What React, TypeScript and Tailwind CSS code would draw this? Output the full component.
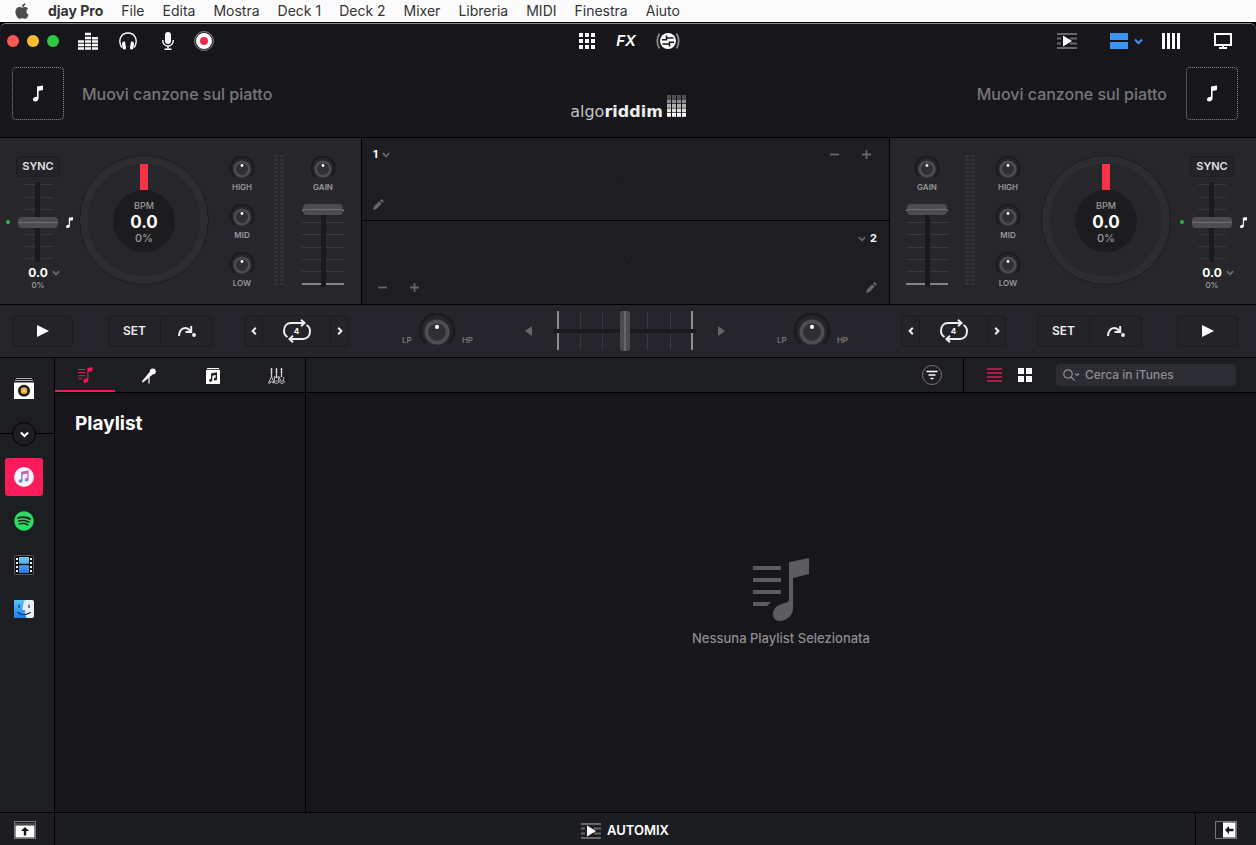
import React, { useState } from 'react'
import { FaApple, FaSpotify } from 'react-icons/fa'

const menuItems = ['File', 'Edita', 'Mostra', 'Deck 1', 'Deck 2', 'Mixer', 'Libreria', 'MIDI', 'Finestra', 'Aiuto']

const NoteIcon: React.FC<any> = ({ className }) => (
    <svg viewBox="0 0 10 16" className={className} fill="currentColor">
        <path d="M4 1 L10 0 V4.6 L5.6 5.4 V12.6 C5.6 14.8 4 16 2.2 16 C0.8 16 0 15.2 0 14 C0 12.4 1.4 11.3 4 11.2 Z" />
    </svg>
)

const ChevronIcon: React.FC<any> = ({ className }) => (
    <svg viewBox="0 0 8 6" className={className} fill="none" stroke="currentColor" strokeWidth="1.8">
        <path d="M0.8 1.2 L4 4.4 L7.2 1.2" />
    </svg>
)

const AutomixIcon: React.FC<any> = () => (
    <svg viewBox="0 0 20 16" className="w-5 h-4">
        <path d="M0 1h20M0 5.5h4M0 10.5h4M0 15h20M13 5.5h7M13 10.5h7" stroke="#68676c" strokeWidth="2" />
        <path d="M6 2.5 L15 8 L6 13.5 Z" fill="#fff" />
    </svg>
)

const PlaylistIcon: React.FC<any> = ({ className }) => (
    <svg viewBox="0 0 57 63" className={className} fill="currentColor">
        <path d="M0 8h28v4h-28zM0 20h28v4h-28zM0 32h28v4h-28zM0 44h18l-4 4h-14z" />
        <path d="M36 4.5 Q36 4 37 4 L56 0 V16 L40 20 V50 C40 58 34 62 27 63 C22 63 20 60 20 56 C20 50 25 47 30 45.5 C34 44.5 36 44 36 41 Z" />
    </svg>
)

const EqualizerIcon: React.FC<any> = () => (
    <svg viewBox="0 0 20 18" className="w-5 h-[18px]" fill="none" stroke="#fff" strokeWidth="2.4">
        <path d="M0 16.5h6M0 13h6M0 9.5h6" />
        <path d="M7 16.5h6M7 13h6M7 9.5h6M7 6h6M7 2h6" />
        <path d="M14 16.5h6M14 13h6M14 9.5h6M14 6.3h6" />
    </svg>
)

const HeadphonesIcon: React.FC<any> = () => (
    <svg viewBox="0 0 18 18" className="w-[18px] h-[18px]">
        <path d="M2.6 15.5 C-1.5 8 2 1 9 1 C16 1 19.5 8 15.4 15.5" fill="none" stroke="#fff" strokeWidth="1.4" />
        <path d="M3 11.5 Q3 10 4.5 9.6 Q6 9 6.2 10.5 L7 16 Q7 17.6 5.5 17.6 Q4 17.6 3.5 16 Z" fill="#fff" />
        <path d="M15 11.5 Q15 10 13.5 9.6 Q12 9 11.8 10.5 L11 16 Q11 17.6 12.5 17.6 Q14 17.6 14.5 16 Z" fill="#fff" />
    </svg>
)

const MicIcon: React.FC<any> = () => (
    <svg viewBox="0 0 12 18" className="w-3 h-[18px]">
        <rect x="3" y="0" width="6" height="12" rx="3" fill="#fff" />
        <path d="M0.7 8 C0.7 16 11.3 16 11.3 8 M6 14v3M2.5 17.2h7" fill="none" stroke="#fff" strokeWidth="1.4" />
    </svg>
)

const RecordIcon: React.FC<any> = () => (
    <svg viewBox="0 0 20 20" className="w-5 h-5">
        <circle cx="10" cy="10" r="9.4" fill="none" stroke="#8b8b8e" />
        <circle cx="10" cy="10" r="8" fill="#fff" />
        <circle cx="10" cy="10" r="4" fill="#f3254a" />
    </svg>
)

const CrossfadeIcon: React.FC<any> = () => (
    <svg viewBox="0 0 24 18" className="w-6 h-[18px]" fill="none">
        <circle cx="12" cy="9" r="8" fill="#fff" />
        <path d="M3.5 1.5 Q-1 9 3.5 16.5 M20.5 1.5 Q25 9 20.5 16.5" stroke="#8b8b8e" strokeWidth="1.8" />
        <path d="M17.5 6H10.5M10.5 3.5V8.5M10.5 7.7H6M6.5 12H13.5M13.5 14.5V9.5M13.5 10.3H18" stroke="#17161a" strokeWidth="1.5" />
    </svg>
)

const LoopIcon: React.FC<any> = () => (
    <svg viewBox="0 0 28 24" className="w-7 h-6" fill="none" stroke="#eeeef0" strokeWidth="2">
        <path d="M4.5 18 C2 16.5 1 14 1 12 C1 7 4 4 8 4 H20" />
        <path d="M18 0.8 L21.5 4 L18 7.2" />
        <path d="M23.5 6 C26 7.5 27 10 27 12 C27 17 24 20 20 20 H8" />
        <path d="M10 16.8 L6.5 20 L10 23.2" />
    </svg>
)

const SkipIcon: React.FC<any> = () => (
    <svg viewBox="0 0 18 12" className="w-[18px] h-3" fill="none" stroke="#eeeef0" strokeWidth="2">
        <path d="M1 11 C1.5 3 8 0.5 12.5 6" />
        <path d="M13.2 1 V7 H7.5" />
        <circle cx="16" cy="10" r="1.9" fill="#eeeef0" stroke="none" />
    </svg>
)

const PencilIcon: React.FC<any> = () => (
    <svg viewBox="0 0 11 11" className="w-[11px] h-[11px]" fill="currentColor">
        <path d="M0 11 L1 7.5 L6.2 2.3 L8.7 4.8 L3.5 10 Z M7 1.5 L8 0.5 Q8.8 0 9.6 0.8 L10.3 1.5 Q11 2.2 10.4 3 L9.5 4 Z" />
    </svg>
)

const Knob: React.FC<any> = ({ label, large }) => (
    <label className={large ? 'relative block w-[38px] h-[38px]' : 'relative block w-[26px] h-[26px]'}>
        <svg viewBox="0 0 26 26" className="w-full h-full">
            <path d="M5.2 20.8 A11.6 11.6 0 1 1 20.8 20.8" fill="none" stroke="#1b1a1e" strokeWidth="2" />
            <circle cx="13" cy="13" r="7.3" fill="#303034" stroke="#4d4d52" strokeWidth="2.6" />
            <circle cx="13" cy="9.5" r="1.4" fill="#fff" />
        </svg>
        <input type="range" aria-label={label} className="absolute inset-0 w-full h-full opacity-0" />
    </label>
)

const LabeledKnob: React.FC<any> = ({ label }) => (
    <div className="flex flex-col items-center h-12">
        <Knob label={label} />
        <span className="text-[8px] leading-[10px] font-semibold text-[#98979c]">{label}</span>
    </div>
)

const Meter: React.FC<any> = ({ color }) => (
    <svg viewBox="0 0 10 130" className="w-[10px] h-[130px]">
        {Array.from({ length: 33 }).map((_, i) => (
            <path key={i} d={`M0 ${i * 4 + 1}h4M6 ${i * 4 + 1}h4`} stroke={color} strokeWidth="2" />
        ))}
    </svg>
)

const verticalRange =
    'absolute inset-0 w-full h-full appearance-none bg-transparent [writing-mode:vertical-lr] [direction:rtl] [&::-webkit-slider-thumb]:appearance-none [&::-webkit-slider-thumb]:w-10 [&::-webkit-slider-thumb]:h-[11px] [&::-webkit-slider-thumb]:rounded [&::-webkit-slider-thumb]:bg-[linear-gradient(#4d4c51_45%,#6f6e73_45%,#6f6e73_55%,#4d4c51_55%)]'

const PitchControl: React.FC<any> = ({ deck }) => {
    const [pitch, setPitch] = useState(50)

    return (
        <div className="flex flex-col items-center w-[76px] pt-[18px] shrink-0">
            <button className="w-11 h-[21px] rounded border border-[#1c1b1f] bg-[#242328] text-[11px] font-semibold text-[#e2e2e4]">
                SYNC
            </button>
            <div className="mt-[5px] w-full grid grid-cols-[1fr_40px_1fr] items-center">
                <span className="w-1 h-1 rounded-full bg-[#28b446] ml-1.5" />
                <div className="relative w-10 h-20">
                    <svg viewBox="0 0 40 80" className="w-10 h-20">
                        <path d="M6 2.5h28M6 15.5h28M6 27.5h28M6 52.5h28M6 64.5h28M6 76.5h28" stroke="#38373c" />
                        <rect x="17" y="0" width="5" height="80" rx="1" fill="#1a191d" />
                    </svg>
                    <input
                        type="range"
                        aria-label={`Pitch deck ${deck}`}
                        value={pitch}
                        onChange={(e) => setPitch(Number(e.target.value))}
                        className={verticalRange}
                    />
                </div>
                <NoteIcon className="w-[7px] h-[11px] ml-2 text-white" />
            </div>
            <div className="mt-1 w-full grid grid-cols-[1fr_auto_1fr] items-center">
                <span />
                <span className="text-[12px] leading-[14px] font-bold text-white">0.0</span>
                <ChevronIcon className="w-2 h-1.5 ml-1 text-[#6c6b70]" />
            </div>
            <span className="text-[8px] leading-[10px] font-medium text-[#a3a2a7]">0%</span>
        </div>
    )
}

const Platter: React.FC<any> = () => (
    <div className="mt-[17px] w-[130px] h-[130px] shrink-0 rounded-full border border-[#1d1c20] bg-[#2d2c31] p-2">
        <div className="w-full h-full rounded-full bg-[#27262a] flex flex-col items-center">
            <div className="w-2 h-[26px] bg-[#fa3246]" />
            <div className="w-[62px] h-[62px] rounded-full bg-[#1c1b1e] flex flex-col items-center pt-2.5">
                <span className="text-[9px] leading-3 font-medium text-[#9b9a9f]">BPM</span>
                <span className="text-[17px] leading-5 font-bold text-white">0.0</span>
                <span className="text-[11px] leading-3 font-medium text-[#9b9a9f]">0%</span>
            </div>
        </div>
    </div>
)

const Equalizer: React.FC<any> = () => (
    <div className="w-[42px] pt-[18px] shrink-0">
        <LabeledKnob label="HIGH" />
        <LabeledKnob label="MID" />
        <LabeledKnob label="LOW" />
    </div>
)

const GainFader: React.FC<any> = ({ deck }) => {
    const [volume, setVolume] = useState(100)

    return (
        <div className="w-[42px] pt-[18px] shrink-0">
            <LabeledKnob label="GAIN" />
            <div className="relative w-[42px] h-[84px]">
                <svg viewBox="0 0 42 84" className="w-[42px] h-[84px]">
                    <path d="M0 18.5h42M0 30.5h42M0 43.5h42M0 55.5h42M0 67.5h42" stroke="#39383d" />
                    <path d="M0 6.5h42" stroke="#a5a4a9" />
                    <path d="M0 80h42" stroke="#858489" strokeWidth="2" />
                    <rect x="19" y="8" width="5" height="75" rx="1" fill="#1a191d" />
                </svg>
                <input
                    type="range"
                    aria-label={`Volume deck ${deck}`}
                    value={volume}
                    onChange={(e) => setVolume(Number(e.target.value))}
                    className={verticalRange}
                />
            </div>
        </div>
    )
}

const ZoomButtons: React.FC<any> = () => (
    <div className="flex gap-[21px]">
        <button aria-label="Zoom out" className="w-[11px] h-[11px] flex items-center">
            <svg viewBox="0 0 11 11" className="w-[11px] h-[11px]"><path d="M1 5.5h9" stroke="currentColor" strokeWidth="1.8" /></svg>
        </button>
        <button aria-label="Zoom in" className="w-[11px] h-[11px] flex items-center">
            <svg viewBox="0 0 11 11" className="w-[11px] h-[11px]"><path d="M1 5.5h9M5.5 1v9" stroke="currentColor" strokeWidth="1.8" /></svg>
        </button>
    </div>
)

const buttonGroup = 'flex h-8 rounded border border-[#1d1c20] bg-[#242328] text-[#eeeef0]'

const PlayButton: React.FC<any> = () => (
    <button aria-label="Play" className="w-[61px] h-8 rounded border border-[#1d1c20] bg-[#242328] flex items-center justify-center">
        <svg viewBox="0 0 12 12" className="w-3 h-3"><path d="M0 0 L12 6 L0 12 Z" fill="#fff" /></svg>
    </button>
)

const CueButtons: React.FC<any> = () => (
    <div className={buttonGroup + ' w-[105px]'}>
        <button className="flex-1 border-r border-[#1d1c20] text-[12px] font-semibold">SET</button>
        <button aria-label="Skip" className="flex-1 flex items-center justify-center"><SkipIcon /></button>
    </div>
)

const LoopButtons: React.FC<any> = () => (
    <div className={buttonGroup + ' w-[105px]'}>
        <button aria-label="Shorter loop" className="w-[17px] flex items-center justify-center">
            <svg viewBox="0 0 6 8" className="w-1.5 h-2" fill="none" stroke="currentColor" strokeWidth="2"><path d="M4.8 0.8 L1.6 4 L4.8 7.2" /></svg>
        </button>
        <button aria-label="Loop" className="flex-1 border-x border-[#1d1c20] grid place-items-center">
            <span className="col-start-1 row-start-1"><LoopIcon /></span>
            <span className="col-start-1 row-start-1 text-[8px] font-bold text-white">4</span>
        </button>
        <button aria-label="Longer loop" className="w-[17px] flex items-center justify-center">
            <svg viewBox="0 0 6 8" className="w-1.5 h-2" fill="none" stroke="currentColor" strokeWidth="2"><path d="M1.2 0.8 L4.4 4 L1.2 7.2" /></svg>
        </button>
    </div>
)

const FilterKnob: React.FC<any> = () => (
    <div className="flex items-center justify-between w-[71px] pt-0.5">
        <span className="mt-4 text-[8px] leading-[10px] font-semibold text-[#77767b]">LP</span>
        <Knob large label="Filter" />
        <span className="mt-4 text-[8px] leading-[10px] font-semibold text-[#77767b]">HP</span>
    </div>
)

const Crossfader: React.FC<any> = () => {
    const [position, setPosition] = useState(50)

    return (
        <div className="flex items-center justify-between w-[200px]">
            <button aria-label="Fade left">
                <svg viewBox="0 0 7 10" className="w-[7px] h-[10px]"><path d="M7 0 L0 5 L7 10 Z" fill="#66656a" /></svg>
            </button>
            <div className="relative w-[142px] h-10">
                <svg viewBox="0 0 142 40" className="w-[142px] h-10">
                    <path d="M26.5 1v38M48.5 1v38M93.5 1v38M116.5 1v38" stroke="#3a393e" />
                    <path d="M4 0v39M138 0v39" stroke="#8d8c91" strokeWidth="2" />
                    <rect y="18" width="142" height="4" fill="#1a191d" />
                </svg>
                <input
                    type="range"
                    aria-label="Crossfader"
                    value={position}
                    onChange={(e) => setPosition(Number(e.target.value))}
                    className="absolute inset-0 w-full h-full appearance-none bg-transparent [&::-webkit-slider-thumb]:appearance-none [&::-webkit-slider-thumb]:w-[10px] [&::-webkit-slider-thumb]:h-10 [&::-webkit-slider-thumb]:rounded-[3px] [&::-webkit-slider-thumb]:bg-[linear-gradient(90deg,#4b4b50_40%,#68676c_40%,#68676c_60%,#4b4b50_60%)]"
                />
            </div>
            <button aria-label="Fade right">
                <svg viewBox="0 0 7 10" className="w-[7px] h-[10px]"><path d="M0 0 L7 5 L0 10 Z" fill="#66656a" /></svg>
            </button>
        </div>
    )
}

const CoverBox: React.FC<any> = () => (
    <div className="w-[52px] h-[53px] rounded border border-dotted border-[#8d8c91] flex items-center justify-center">
        <NoteIcon className="w-[10px] h-[17px] text-white" />
    </div>
)

const Header: React.FC<any> = () => (
    <header className="rounded-t-md border-t border-[#8a8a8c] bg-[#17161a]">
        <div className="grid grid-cols-[1fr_auto_1fr] items-center h-[34px]">
            <div className="flex items-center pl-[7px]">
                <div className="flex gap-2 mr-[19px]">
                    <button aria-label="Close" className="w-3 h-3 rounded-full bg-[#fc5753]" />
                    <button aria-label="Minimize" className="w-3 h-3 rounded-full bg-[#fdbc2e]" />
                    <button aria-label="Maximize" className="w-3 h-3 rounded-full bg-[#2fc840]" />
                </div>
                <button aria-label="Mixer" className="mr-[21px]"><EqualizerIcon /></button>
                <button aria-label="Headphones" className="mr-[25px]"><HeadphonesIcon /></button>
                <button aria-label="Microphone" className="mr-5"><MicIcon /></button>
                <button aria-label="Record"><RecordIcon /></button>
            </div>
            <div className="flex items-center gap-[19px] pl-[3px]">
                <button aria-label="Sampler" className="w-[17px]">
                    <svg viewBox="0 0 16 16" className="w-4 h-4" fill="#fff">
                        <path d="M0 0h4v4h-4zM6 0h4v4h-4zM12 0h4v4h-4zM0 6h4v4h-4zM6 6h4v4h-4zM12 6h4v4h-4zM0 12h4v4h-4zM6 12h4v4h-4zM12 12h4v4h-4z" />
                    </svg>
                </button>
                <button className="w-[22px] text-[15px] leading-5 font-semibold italic text-white">FX</button>
                <button aria-label="Crossfade"><CrossfadeIcon /></button>
            </div>
            <div className="flex items-center justify-end pr-6">
                <button aria-label="Automix queue" className="mr-[33px]"><AutomixIcon /></button>
                <button aria-label="Deck layout" className="flex items-center gap-[6px] mr-[19px] text-[#3b94f7]">
                    <svg viewBox="0 0 18 16" className="w-[18px] h-4" fill="currentColor"><path d="M0 0h18v7h-18zM0 9h18v7h-18z" /></svg>
                    <ChevronIcon className="w-[9px] h-[7px]" />
                </button>
                <button aria-label="Waveform layout" className="mr-[34px]">
                    <svg viewBox="0 0 18 16" className="w-[18px] h-4"><path d="M1.5 0v16M6.5 0v16M11.5 0v16M16.5 0v16" stroke="#fff" strokeWidth="3" /></svg>
                </button>
                <button aria-label="Video output">
                    <svg viewBox="0 0 18 16" className="w-[18px] h-4" fill="none" stroke="#fff" strokeWidth="2"><path d="M1 1h16v11h-16zM9 12v3M5 15h8" /></svg>
                </button>
            </div>
        </div>
        <div className="grid grid-cols-[1fr_auto_1fr] items-start h-[79px] pt-[9px] px-3">
            <div className="flex items-center gap-[18px]">
                <CoverBox />
                <span className="text-[16px] font-medium text-[#77767b]">Muovi canzone sul piatto</span>
            </div>
            <div className="flex items-end gap-1 mt-7">
                <span className="font-['DejaVu_Sans',sans-serif] text-[16px] leading-[14px] pb-px">
                    <span className="text-[#c4c4c7]">algo</span><span className="font-bold text-[#eeeef0]">riddim</span>
                </span>
                <svg viewBox="0 0 19 22" className="w-[19px] h-[22px] mb-[3px]" fill="#fff">
                    {[0.25, 0.5, 0.65, 0.85, 1].map((opacity, row) =>
                        [0, 1, 2, 3].map((col) => (
                            <rect key={`${row}-${col}`} x={col * 5} y={row * 4.5} width="4" height="3.8" opacity={opacity} />
                        ))
                    )}
                </svg>
            </div>
            <div className="flex items-center justify-end gap-[19px] pr-1.5">
                <span className="text-[16px] font-medium text-[#77767b]">Muovi canzone sul piatto</span>
                <CoverBox />
            </div>
        </div>
    </header>
)

const Decks: React.FC<any> = () => (
    <section className="grid grid-cols-[361px_1fr_366px] h-[167px] gap-px border-t border-black bg-black">
        <div className="bg-[#27262b] flex items-start">
            <PitchControl deck={1} />
            <div className="ml-[3px]"><Platter /></div>
            <div className="ml-3"><Equalizer /></div>
            <div className="ml-[11px] pt-[17px]"><Meter color="#333237" /></div>
            <div className="ml-[18px]"><GainFader deck={1} /></div>
        </div>
        <div className="grid grid-rows-[82px_1fr] gap-px text-[#66656a]">
            <div className="bg-[#1e1d21] flex flex-col justify-between py-[10px] pl-[11px] pr-[17px]">
                <div className="flex items-center justify-between">
                    <button className="flex items-center gap-1 text-[11px] leading-3 font-bold text-white">
                        1 <ChevronIcon className="w-2 h-1.5 mt-0.5 text-[#66656a]" />
                    </button>
                    <ZoomButtons />
                </div>
                <span className="self-center w-px h-px bg-black" />
                <button aria-label="Edit grid deck 1" className="self-start"><PencilIcon /></button>
            </div>
            <div className="bg-[#1e1d21] flex flex-col justify-between py-[11px] pl-[15px] pr-3">
                <button className="self-end flex items-center gap-1 text-[11px] leading-3 font-bold text-white">
                    <ChevronIcon className="w-2 h-1.5 mt-0.5 text-[#66656a]" /> 2
                </button>
                <span className="self-center w-px h-px bg-black" />
                <div className="flex items-center justify-between">
                    <ZoomButtons />
                    <button aria-label="Edit grid deck 2"><PencilIcon /></button>
                </div>
            </div>
        </div>
        <div className="bg-[#27262b] flex items-start pl-4">
            <GainFader deck={2} />
            <div className="ml-[17px] pt-[17px]"><Meter color="#353534" /></div>
            <div className="ml-3"><Equalizer /></div>
            <div className="ml-3"><Platter /></div>
            <div className="ml-[3px]"><PitchControl deck={2} /></div>
        </div>
    </section>
)

const Transport: React.FC<any> = () => (
    <section className="flex items-center justify-between h-[53px] pl-3 pr-[18px] border-t border-black bg-[#26252b]">
        <div className="flex items-center">
            <PlayButton />
            <div className="ml-[35px] mr-[31px]"><CueButtons /></div>
            <LoopButtons />
        </div>
        <div className="flex items-center gap-[52px]">
            <FilterKnob />
            <Crossfader />
            <FilterKnob />
        </div>
        <div className="flex items-center">
            <LoopButtons />
            <div className="ml-[31px] mr-[35px]"><CueButtons /></div>
            <PlayButton />
        </div>
    </section>
)

const Sources: React.FC<any> = () => (
    <nav className="w-[55px] shrink-0 border-r border-black bg-[#1c1e21] flex flex-col">
        <div className="h-[76px] border-b border-black pt-5 pl-[14px]">
            <button aria-label="Queue">
                <svg viewBox="0 0 20 22" className="w-5 h-[22px]">
                    <path d="M2 0.5h16M1 2.5h18" stroke="#a9a9ac" />
                    <rect y="4.5" width="20" height="16.5" fill="#fff" />
                    <circle cx="10" cy="12.7" r="6" fill="#17161a" />
                    <circle cx="10" cy="12.7" r="3.4" fill="#f0a830" />
                    <circle cx="10" cy="12.7" r="1.2" fill="#fde6a8" />
                </svg>
            </button>
        </div>
        <button aria-label="Expand" className="relative -mt-3 ml-3 w-6 h-6 rounded-full border border-black bg-[#1c1e21] flex items-center justify-center">
            <ChevronIcon className="w-[9px] h-[7px] text-white" />
        </button>
        <div className="flex flex-col gap-1.5 mt-3 ml-[5px]">
            <button aria-label="iTunes" className="w-[38px] h-[38px] rounded-[3px] bg-[#fb1b5b] flex items-center justify-center">
                <svg viewBox="0 0 20 20" className="w-5 h-5">
                    <defs>
                        <linearGradient id="itunes" x1="1" y1="0" x2="0" y2="1">
                            <stop offset="0" stopColor="#f2578f" />
                            <stop offset="0.5" stopColor="#a468d8" />
                            <stop offset="1" stopColor="#3f8df0" />
                        </linearGradient>
                    </defs>
                    <circle cx="10" cy="10" r="10" fill="#dfe2f5" />
                    <circle cx="10" cy="10" r="9" fill="#f6f6fc" />
                    <path d="M7.2 4.8 L14.6 3.2 V12.4 A2 1.7 -15 1 1 13.2 11 V6.6 L8.6 7.6 V14 A2 1.7 -15 1 1 7.2 12.4 Z" fill="url(#itunes)" />
                </svg>
            </button>
            <button aria-label="Spotify" className="w-[38px] h-[38px] flex items-center justify-center">
                <FaSpotify className="w-5 h-5 text-[#2bdb62]" />
            </button>
            <button aria-label="Video" className="w-[38px] h-[38px] flex items-center justify-center">
                <svg viewBox="0 0 20 20" className="w-5 h-5">
                    <defs>
                        <linearGradient id="film" x1="0" y1="0" x2="0" y2="1">
                            <stop offset="0" stopColor="#6fd0fb" />
                            <stop offset="1" stopColor="#2478ee" />
                        </linearGradient>
                    </defs>
                    <rect x="0.5" y="0.5" width="19" height="19" rx="1.5" fill="#0d0d10" stroke="#55555a" />
                    <rect x="5" y="2" width="10" height="16" fill="url(#film)" />
                    <path d="M4.5 9.5h11" stroke="#0d0d10" strokeWidth="1.5" />
                    <path d="M3 3v14M17 3v14" stroke="#fff" strokeWidth="2" strokeDasharray="2 2" />
                </svg>
            </button>
            <button aria-label="Finder" className="w-[38px] h-[38px] flex items-center justify-center">
                <svg viewBox="0 0 20 18" className="w-5 h-[18px]">
                    <defs>
                        <linearGradient id="finder" x1="0" y1="0" x2="0" y2="1">
                            <stop offset="0" stopColor="#5cc7fa" />
                            <stop offset="1" stopColor="#1b7cf0" />
                        </linearGradient>
                    </defs>
                    <rect width="20" height="18" rx="2" fill="#e8eef8" />
                    <path d="M2 0 H11 C9 4 8.5 7 8.5 10 H11 C11 13 11.5 16 12.5 18 H2 Q0 18 0 16 V2 Q0 0 2 0" fill="url(#finder)" />
                    <path d="M5 5v2.5M15 5v2.5M3.8 12.5 Q10 17 16.2 12.5" fill="none" stroke="#17304d" strokeWidth="1.2" strokeLinecap="round" />
                </svg>
            </button>
        </div>
    </nav>
)

const PlaylistPanel: React.FC<any> = () => (
    <aside className="w-[251px] shrink-0 border-r border-black">
        <div className="flex gap-1 h-[35px] border-b border-black bg-[#1c1e21]">
            <button aria-label="Playlist" className="w-[60px] border-b-2 border-[#ec1c5b] pt-0.5 flex items-center justify-center text-[#ec1c5b]">
                <PlaylistIcon className="w-[15px] h-4" />
            </button>
            <button aria-label="Artisti" className="w-[60px] pt-0.5 flex items-center justify-center text-white">
                <svg viewBox="0 0 14 16" className="w-3.5 h-4" fill="currentColor">
                    <circle cx="10.8" cy="3.4" r="3" />
                    <path d="M7.6 4 L10.4 6.8 L1.6 14 L0 14.8 L0.4 12.8 Z" />
                    <path d="M7 9v6.5" stroke="currentColor" strokeWidth="1.2" />
                </svg>
            </button>
            <button aria-label="Album" className="w-[60px] pt-0.5 flex items-center justify-center">
                <svg viewBox="0 0 14 16" className="w-3.5 h-4">
                    <path d="M1 0.6h12" stroke="#fff" strokeWidth="1.2" />
                    <rect y="2" width="14" height="14" fill="#fff" />
                    <path d="M5 5.5 L11 4.3 V11 A1.6 1.4 0 1 1 9.7 9.8 V7 L6.3 7.7 V12.3 A1.6 1.4 0 1 1 5 11 Z" fill="#1c1e21" />
                </svg>
            </button>
            <button aria-label="Generi" className="flex-1 pt-0.5 flex items-center justify-center">
                <svg viewBox="0 0 17 16" className="w-[17px] h-4" fill="none" stroke="#d6d6d8" strokeWidth="0.9">
                    <path d="M3.5 0v9M8.5 0v10M13.5 0v9" strokeWidth="1.2" />
                    <path d="M2.5 1.5h2M7.5 2h2M12.5 1.5h2M2.5 4h2M7.5 4h2M12.5 4h2" />
                    <path d="M3.5 8.5 L0.5 15 L2 15.2 L3.5 13.2 L5 15.2 L6 14.5 Z" />
                    <path d="M6.3 8.5 Q5.8 10 6.6 11 Q5.2 15.4 8.5 15.4 Q11.8 15.4 10.4 11 Q11.2 10 10.7 8.5 Q8.5 11 6.3 8.5M7.5 13h2" />
                    <path d="M12 8.5 Q11 10 12.2 11.3 Q11.2 15.4 14 15.4 Q17.5 15 15.4 11.8 Q16.4 10 15.4 9M13 13h2" />
                </svg>
            </button>
        </div>
        <h1 className="pl-5 pt-[19px] text-[19px] leading-6 font-bold text-white">Playlist</h1>
    </aside>
)

const Library: React.FC<any> = () => {
    const [search, setSearch] = useState('')

    return (
        <main className="flex-1 flex flex-col min-w-0">
            <div className="flex h-[35px] border-b border-black bg-[#1c1e21]">
                <div className="flex-1 flex items-center justify-end pr-[21px]">
                    <button aria-label="Filter" className="w-5 h-5 rounded-full border border-[#77767b] flex items-center justify-center">
                        <svg viewBox="0 0 12 10" className="w-3 h-[10px]"><path d="M0.5 1.5h11M2.5 5h7M4.5 8.5h3" stroke="#fff" strokeWidth="1.6" /></svg>
                    </button>
                </div>
                <div className="flex items-center border-l border-black pl-[23px] pr-5">
                    <button aria-label="List view" className="mr-4">
                        <svg viewBox="0 0 15 14" className="w-[15px] h-3.5"><path d="M0 1h15M0 5h15M0 9h15M0 13h15" stroke="#d61f57" strokeWidth="1.5" /></svg>
                    </button>
                    <button aria-label="Grid view" className="mr-6">
                        <svg viewBox="0 0 14 14" className="w-3.5 h-3.5" fill="#fff"><path d="M0 0h6v6h-6zM8 0h6v6h-6zM0 8h6v6h-6zM8 8h6v6h-6z" /></svg>
                    </button>
                    <label className="flex items-center gap-[5px] w-[180px] h-[22px] px-[7px] rounded bg-[#2c2d32] text-[#8d8c91]">
                        <svg viewBox="0 0 17 12" className="w-[17px] h-3 shrink-0" fill="none" stroke="currentColor" strokeWidth="1.2">
                            <circle cx="5" cy="5" r="4.2" />
                            <path d="M8 8 L11.5 11.5M12 4.5 L14 6.5 L16 4.5" />
                        </svg>
                        <input
                            type="text"
                            aria-label="Cerca in iTunes"
                            placeholder="Cerca in iTunes"
                            value={search}
                            onChange={(e) => setSearch(e.target.value)}
                            className="w-full min-w-0 bg-transparent text-[12px] font-medium placeholder:text-[#8d8c91] focus:outline-none"
                        />
                    </label>
                </div>
            </div>
            <div className="flex-1 flex flex-col items-center justify-center">
                <PlaylistIcon className="w-[57px] h-[63px] text-[#5d5c61]" />
                <p className="mt-2 text-[13px] leading-[18px] font-medium text-[#8d8c91]">Nessuna Playlist Selezionata</p>
            </div>
        </main>
    )
}

const Footer: React.FC<any> = () => (
    <footer className="grid grid-cols-[55px_1fr_61px] h-[33px] border-t border-black bg-[#1c1d21]">
        <button aria-label="Show deck area" className="flex items-center pt-0.5 pl-[14px] border-r border-black">
            <svg viewBox="0 0 22 18" className="w-[22px] h-[18px]">
                <rect x="0.5" y="0.5" width="21" height="17" fill="none" stroke="#77767b" />
                <path d="M0 3h22" stroke="#77767b" />
                <rect x="1.5" y="4.5" width="19" height="12" fill="#fff" />
                <path d="M11 6 L15 10 H12.2 V14.5 H9.8 V10 H7 Z" fill="#17161a" />
            </svg>
        </button>
        <button className="flex items-center justify-center gap-1.5 pt-[3px] text-[13px] font-semibold text-white">
            <AutomixIcon /> AUTOMIX
        </button>
        <button aria-label="Show side panel" className="flex items-center pt-0.5 pl-[19px] border-l border-black">
            <svg viewBox="0 0 22 18" className="w-[22px] h-[18px]">
                <rect x="0.5" y="0.5" width="21" height="17" fill="none" stroke="#77767b" />
                <rect x="8" y="1.5" width="12.5" height="15" fill="#fff" />
                <path d="M10 9 L14 5 V7.8 H18.5 V10.2 H14 V13 Z" fill="#17161a" />
            </svg>
        </button>
    </footer>
)

const App: React.FC<any> = () => (
    <div className="min-h-screen flex flex-col bg-[#17161a] font-[Inter,sans-serif]">
        <nav className="flex items-center gap-[18px] h-[22px] pl-[15px] bg-[#fcfcfc] text-[14px] leading-5 text-[#333335]">
            <FaApple className="w-[14px] h-[18px] mr-px text-[#4c4c4e]" />
            <button className="font-bold">djay Pro</button>
            {menuItems.map((item) => (
                <button key={item}>{item}</button>
            ))}
        </nav>
        <div className="bg-black pt-px">
            <Header />
        </div>
        <Decks />
        <Transport />
        <div className="flex-1 flex border-t border-black">
            <Sources />
            <PlaylistPanel />
            <Library />
        </div>
        <Footer />
    </div>
)

export default App
